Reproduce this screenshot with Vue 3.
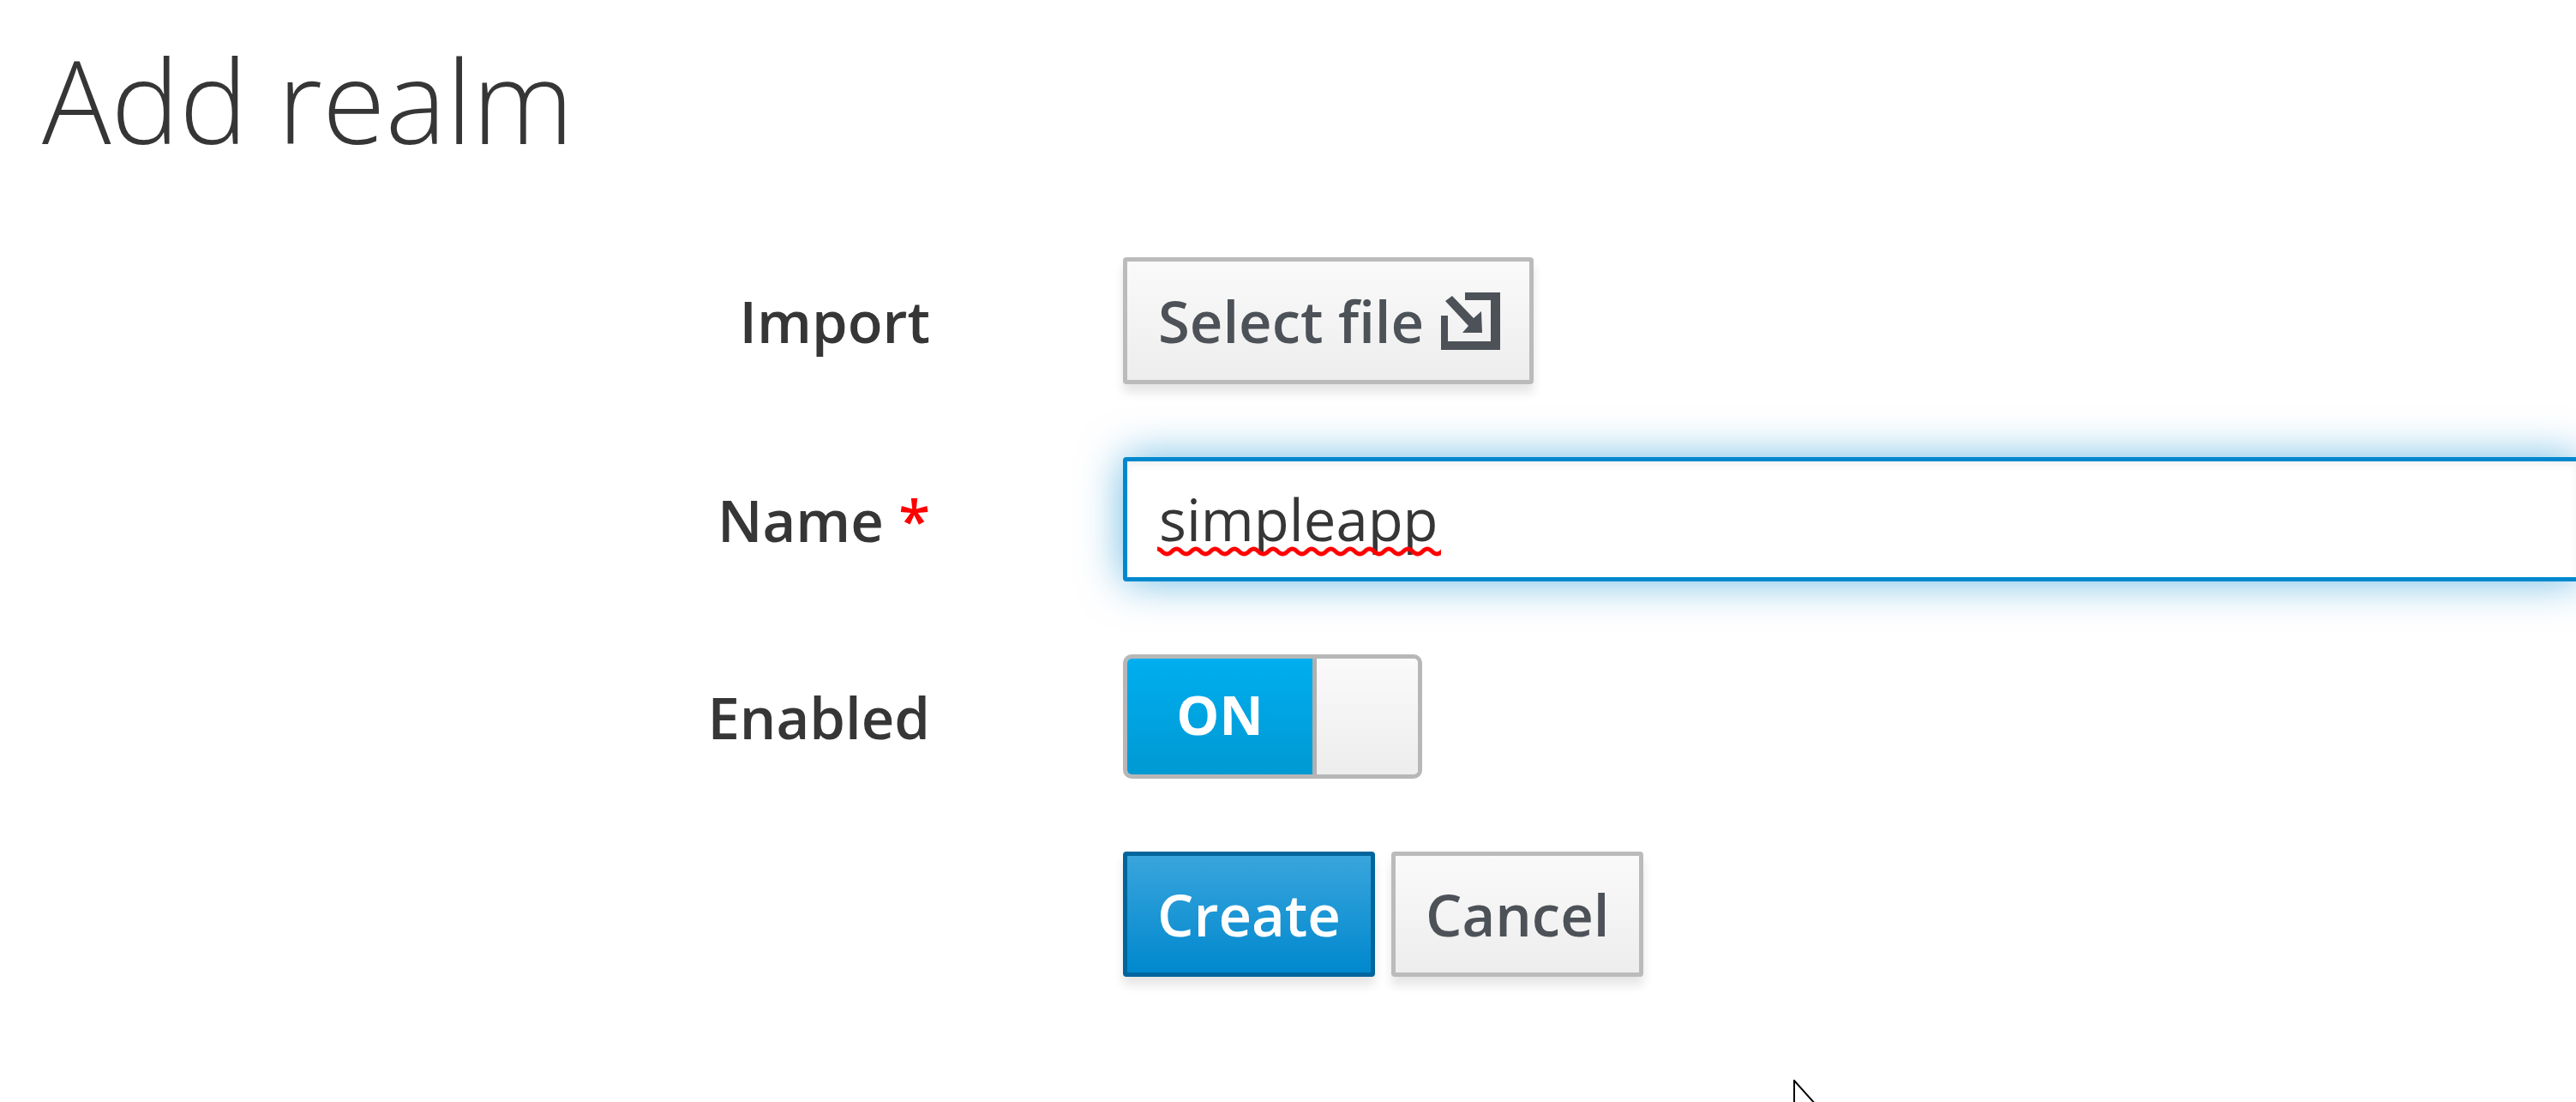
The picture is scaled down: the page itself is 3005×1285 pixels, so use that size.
<template>
  <div class="page">
    <h1 class="title">Add realm</h1>

    <form class="realm-form" @submit.prevent>
      <label class="field-label">Import</label>
      <div>
        <button type="button" class="btn btn-tall">
          Select file
          <svg class="import-icon" viewBox="0 0 69 67" aria-hidden="true">
            <path d="M28 0H69V67H0V27H8V57H58V9H28Z" />
            <path d="M5 10L13 4L38 30L47 22L48 47H25L32 39Z" />
          </svg>
        </button>
      </div>

      <label class="field-label">Name <span class="required">*</span></label>
      <div class="text-input">
        {{ realmName }}
        <!-- spell checker squiggle -->
        <svg class="squiggle" width="331" height="12" aria-hidden="true">
          <pattern id="wave" width="22.5" height="12" patternUnits="userSpaceOnUse">
            <path d="M0 3C5 3 6 9 11.250 9S17.500 3 22.500 3" fill="none" stroke="#f00" stroke-width="5" />
          </pattern>
          <rect width="331" height="12" fill="url(#wave)" />
        </svg>
      </div>

      <label class="field-label">Enabled</label>
      <div>
        <div class="toggle">
          <span class="toggle-on">ON</span>
          <span class="toggle-handle"></span>
        </div>
      </div>

      <div class="actions">
        <button type="submit" class="btn btn-primary">Create</button>
        <button type="button" class="btn">Cancel</button>
      </div>
    </form>

    <!-- mouse pointer caught by the screenshot -->
    <svg class="cursor" width="30" height="26" viewBox="0 0 30 26" aria-hidden="true">
      <path d="M1 1V40L12 30H27Z" fill="#fff" stroke="#000" stroke-width="2" />
    </svg>
  </div>
</template>

<script setup>
import { ref } from 'vue'

const realmName = ref('simpleapp')
</script>

<style scoped>
.page {
  position: relative;
  height: 1285px;
  overflow: hidden;
  background: #fff;
  font-family: "Open Sans", "Noto Sans", sans-serif;
  color: #363636;
}

.title {
  margin: 0;
  padding: 31px 0 0 49px;
  font-size: 134px;
  line-height: 170px;
  font-weight: 300;
  color: #363636;
}

.realm-form {
  display: grid;
  grid-template-columns: 1085px 1700px;
  column-gap: 225px;
  row-gap: 85px;
  align-items: center;
  margin-top: 99px;
}

.field-label {
  justify-self: end;
  font-size: 67px;
  font-weight: 600;
  color: #363636;
}

.required {
  color: #f00;
}

.btn {
  height: 146px;
  padding: 0 35px;
  border: 5px solid #bbb;
  border-radius: 4px;
  background: linear-gradient(#fafafa, #ededed);
  box-shadow: 0 10px 12px rgba(3, 3, 3, 0.1);
  font-family: inherit;
  font-size: 67px;
  font-weight: 600;
  color: #4d5258;
}

.btn-tall {
  height: 148px;
  padding: 0 34px 0 36px;
}

.btn-primary {
  border-color: #00659c;
  background: linear-gradient(#39a5dc, #0088ce);
  color: #fff;
}

.import-icon {
  width: 69px;
  height: 67px;
  margin-left: 2px;
  vertical-align: -8px;
  fill: #4d5258;
}

.text-input {
  position: relative;
  height: 145px;
  box-sizing: border-box;
  padding: 0 37px;
  border: 5px solid #0088ce;
  border-radius: 4px;
  background: #fff;
  box-shadow: inset 0 5px 8px rgba(3, 3, 3, 0.05), 0 0 50px rgba(0, 136, 206, 0.58);
  font-size: 67px;
  line-height: 135px;
  color: #363636;
}

.squiggle {
  position: absolute;
  left: 35px;
  top: 99px;
}

.toggle {
  display: flex;
  width: 349px;
  height: 145px;
  box-sizing: border-box;
  border: 5px solid #b7b7b7;
  border-radius: 10px;
  overflow: hidden;
}

.toggle-on {
  width: 216px;
  background: linear-gradient(#00aeef, #0099d3);
  color: #fff;
  font-size: 63px;
  font-weight: 700;
  line-height: 130px;
  text-align: center;
}

.toggle-handle {
  flex: 1;
  border-left: 5px solid #b0b0b0;
  background: linear-gradient(#fafafa, #ededed);
}

.actions {
  grid-column: 2;
  display: flex;
  gap: 19px;
}

.cursor {
  position: absolute;
  left: 2092px;
  top: 1259px;
}
</style>

<style>
html,
body {
  overflow: hidden;
}
</style>
